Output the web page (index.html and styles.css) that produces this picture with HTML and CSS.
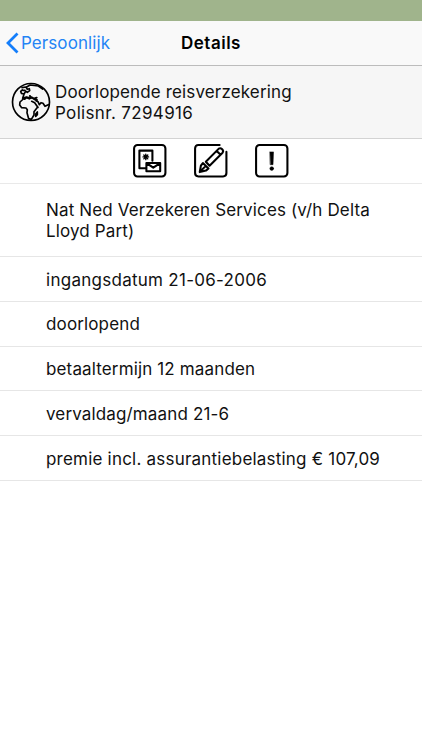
FILE: index.html
```html
<!DOCTYPE html>
<html lang="nl">
<head>
<meta charset="utf-8">
<meta name="viewport" content="width=device-width, initial-scale=1">
<title>Details</title>
<link rel="stylesheet" href="styles.css">
</head>
<body>
<div class="status"></div>
<nav class="nav">
  <a class="back"><svg class="chevron" viewBox="0 0 13 22"><path d="M11.5 1.5 2 11l9.5 9.5"/></svg><span class="back-label">Persoonlijk</span></a>
  <h1 class="title">Details</h1>
</nav>
<header class="policy">
  <svg class="globe" viewBox="33 36 120 120">
    <circle cx="93" cy="96" r="55.5"/>
    <path d="M66 53l12-2 4 7 6-2 1 6-7 5-5-3-5 8-8-2-2-6 5-4M69 61h6M80 51l10-6 25 3 13 9M72 73l-4 12M68 86l8-4 11 1"/>
    <path class="coast" d="M74 87l6-5 8 4 7-4 6 4 9-3M103 88l8 2M90 78l3 6"/>
    <path d="M70 87l-10 9-1 9 6 8 13 1 4 5-1 9 5 18 8 2 8-13 0-10 11-14-9-13-9-4M108 92l6 3 4 9 5-6 6 2 6 9 10-5M114 112l-5-6"/>
    <path d="M107 132l5-6v8l-5 5z"/>
  </svg>
  <div class="policy-text"><div>Doorlopende reisverzekering</div><div class="number">Polisnr. 7294916</div></div>
</header>
<div class="actions">
  <svg class="action" viewBox="0 0 34 34">
    <rect x="1.1" y="1.1" width="31.8" height="31.8" rx="3.5"/>
    <path d="M13 24.7H6.5V6.7H19.7V17"/>
    <path class="thin" d="M13 10.3v5.6M10.2 13.1h5.6M11 11.1l4 4M15 11.1l-4 4"/>
    <path d="M13.6 19.2H27.6V27.7H13.6zM14 19.6l6.6 4.4 6.6-4.4"/>
  </svg>
  <svg class="action" viewBox="0 0 34 34">
    <path d="M26 1.1H4.5Q1.1 1.1 1.1 4.5V29.5Q1.1 32.9 4.5 32.9H29.5Q32.9 32.9 32.9 29.5V8"/>
    <path d="M12 18 25.2 4.7Q26.8 3.6 28.6 5.4 30.3 7.2 29 8.8L15.8 22zM23 7l4 4M9 19.3l5.7 5.5-2.6 2.2L5.8 28.5 7 22zM6 28.2l5-5"/>
  </svg>
  <svg class="action" viewBox="0 0 34 34">
    <rect x="1.1" y="1.1" width="31.8" height="31.8" rx="3.5"/>
    <path class="solid" d="M15.2 8h3.6l-.5 13h-2.6z"/><circle class="solid" cx="17" cy="24.9" r="1.9"/>
  </svg>
</div>
<ul class="rows">
  <li class="row tall">Nat Ned Verzekeren Services (v/h Delta<br>Lloyd Part)</li>
  <li class="row date">ingangsdatum 21-06-2006</li>
  <li class="row">doorlopend</li>
  <li class="row">betaaltermijn 12 maanden</li>
  <li class="row">vervaldag/maand 21-6</li>
  <li class="row premium">premie incl. assurantiebelasting € 107,09</li>
</ul>
</body>
</html>
```
FILE: styles.css
```css
* { box-sizing: border-box; }
body {
  margin: 0;
  min-height: 750px;
  background: #fff;
  color: #111;
  font: 17px/21px Inter, "Liberation Sans", sans-serif;
  letter-spacing: 0.14px;
  white-space: nowrap;
}
svg { display: block; fill: none; stroke: #000; stroke-linecap: round; stroke-linejoin: round; }
.status { height: 21px; background: #a0b48c; }
.nav {
  height: 45px;
  display: grid;
  grid-template-columns: 1fr auto 1fr;
  align-items: center;
  background: #f9f9f9;
  border-bottom: 1px solid #bcbcbc;
}
.back { display: flex; align-items: center; gap: 2px; padding-left: 6px; color: #2384f5; letter-spacing: 0.08px; }
.chevron { width: 13px; height: 22px; stroke: #147efb; stroke-width: 2.8; stroke-linecap: butt; stroke-linejoin: miter; }
.title { margin: 0; padding-top: 1px; font-size: 17px; font-weight: 600; color: #000; letter-spacing: 0.5px; }
.policy {
  height: 73px;
  display: flex;
  align-items: center;
  gap: 4px;
  padding-left: 11px;
  background: #f6f6f6;
  border-bottom: 1px solid #d3d3d3;
}
.policy-text { padding-top: 2px; }
.number { letter-spacing: 0.34px; }
.globe { width: 40px; height: 40px; stroke-width: 5; }
.coast { stroke-width: 6; }
.actions {
  height: 45px;
  display: flex;
  justify-content: center;
  align-items: center;
  gap: 27.5px;
  border-bottom: 1px solid #e9e9e9;
}
.action { width: 33.5px; height: 33.5px; stroke-width: 2.1; }
.thin { stroke-width: 1.4; }
.solid { fill: #000; stroke-width: 0.5; }
.rows { margin: 0; padding: 0; list-style: none; }
.row {
  height: 44.8px;
  display: flow-root;
  padding: 12.6px 0 0 46px;
  border-bottom: 1px solid #e6e6e6;
}
.tall { height: 73px; padding-top: 16px; }
.date { letter-spacing: 0.27px; }
.premium { letter-spacing: 0.21px; }
```
